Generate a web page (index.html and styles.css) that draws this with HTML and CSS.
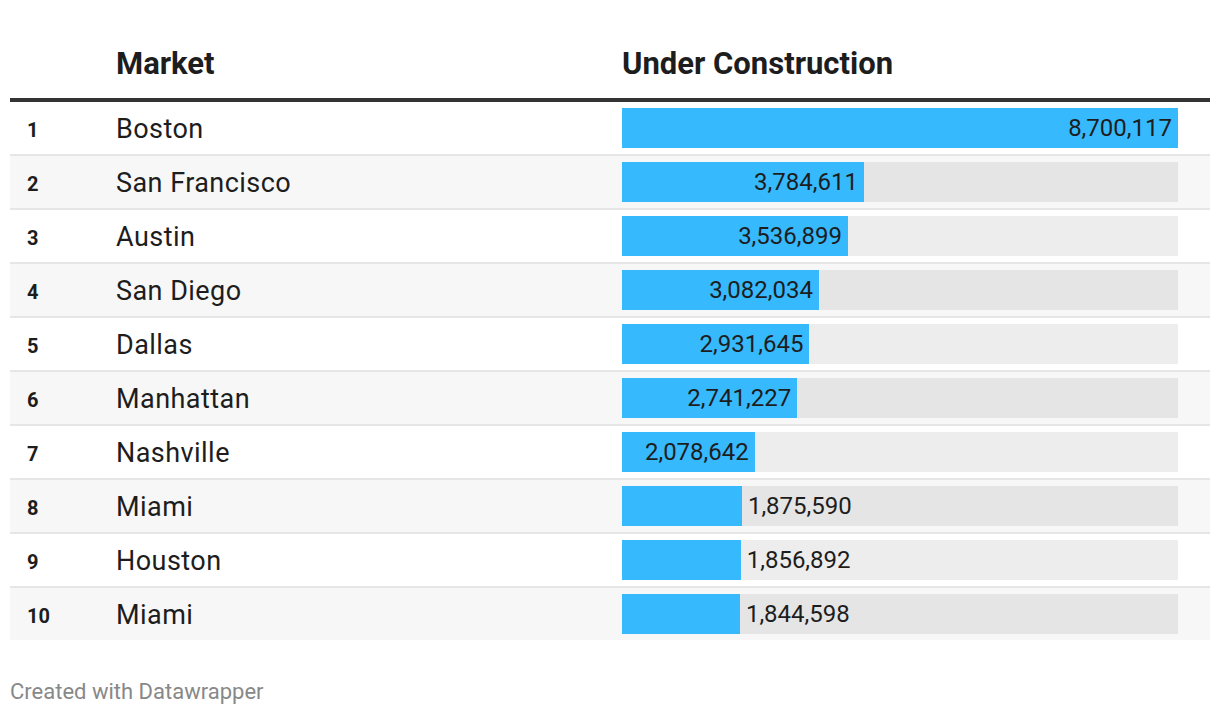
FILE: index.html
```html
<!DOCTYPE html>
<html>
<head>
<meta charset="utf-8">
<link rel="stylesheet" href="styles.css">
</head>
<body>
<div class="chart">
  <div class="thead">
    <div class="c-rank"></div>
    <div class="c-name">Market</div>
    <div class="c-bar">Under Construction</div>
  </div>
  <div class="tbody">
    <div class="row"><div class="c-rank">1</div><div class="c-name">Boston</div><div class="c-bar"><div class="track"><div class="bar" style="width:556px"><span class="lbl in">8,700,117</span></div></div></div></div>
    <div class="row alt"><div class="c-rank">2</div><div class="c-name">San Francisco</div><div class="c-bar"><div class="track"><div class="bar" style="width:241.9px"><span class="lbl in">3,784,611</span></div></div></div></div>
    <div class="row"><div class="c-rank">3</div><div class="c-name">Austin</div><div class="c-bar"><div class="track"><div class="bar" style="width:226px"><span class="lbl in">3,536,899</span></div></div></div></div>
    <div class="row alt"><div class="c-rank">4</div><div class="c-name">San Diego</div><div class="c-bar"><div class="track"><div class="bar" style="width:197px"><span class="lbl in">3,082,034</span></div></div></div></div>
    <div class="row"><div class="c-rank">5</div><div class="c-name">Dallas</div><div class="c-bar"><div class="track"><div class="bar" style="width:187.4px"><span class="lbl in">2,931,645</span></div></div></div></div>
    <div class="row alt"><div class="c-rank">6</div><div class="c-name">Manhattan</div><div class="c-bar"><div class="track"><div class="bar" style="width:175.2px"><span class="lbl in">2,741,227</span></div></div></div></div>
    <div class="row"><div class="c-rank">7</div><div class="c-name">Nashville</div><div class="c-bar"><div class="track"><div class="bar" style="width:132.8px"><span class="lbl in">2,078,642</span></div></div></div></div>
    <div class="row alt"><div class="c-rank">8</div><div class="c-name">Miami</div><div class="c-bar"><div class="track"><div class="bar" style="width:119.9px"></div><span class="lbl out">1,875,590</span></div></div></div>
    <div class="row"><div class="c-rank">9</div><div class="c-name">Houston</div><div class="c-bar"><div class="track"><div class="bar" style="width:118.7px"></div><span class="lbl out">1,856,892</span></div></div></div>
    <div class="row alt"><div class="c-rank">10</div><div class="c-name">Miami</div><div class="c-bar"><div class="track"><div class="bar" style="width:117.9px"></div><span class="lbl out">1,844,598</span></div></div></div>
  </div>
  <div class="footer">Created with Datawrapper</div>
</div>
</body>
</html>
```

FILE: styles.css
```css
html, body {
  margin: 0;
  padding: 0;
  background: #ffffff;
}
body {
  font-family: Roboto, "Liberation Sans", sans-serif;
  color: #1d1d1d;
}
.chart {
  padding: 0 10px;
}
.thead {
  display: flex;
  padding-top: 46px;
  padding-bottom: 16px;
  border-bottom: 4px solid #333333;
  font-weight: 700;
  font-size: 31px;
  line-height: 36px;
  color: #1d1d1d;
}
.c-rank {
  width: 89px;
  padding-left: 17px;
  flex: none;
}
.c-name {
  width: 506px;
  flex: none;
}
.c-bar {
  width: 556px;
  flex: none;
}
.row {
  display: flex;
  align-items: center;
  height: 52px;
  background: #ffffff;
}
.row + .row {
  border-top: 2px solid #e6e6e6;
}
.row.alt {
  background: #f7f7f7;
}
.row .c-rank {
  font-weight: 700;
  font-size: 20px;
  padding-top: 4px;
}
.row .c-name {
  font-size: 27px;
  letter-spacing: 0.45px;
  padding-top: 2px;
}
.track {
  position: relative;
  height: 40px;
  background: rgba(0, 0, 0, 0.07);
  display: flex;
  align-items: center;
}
.bar {
  height: 40px;
  background: #36b9fd;
  display: flex;
  align-items: center;
  justify-content: flex-end;
  flex: none;
}
.lbl {
  font-size: 24px;
  white-space: nowrap;
  color: #1d1d1d;
}
.lbl.in {
  padding-right: 6px;
}
.lbl.out {
  padding-left: 6px;
}
.footer {
  margin-top: 40px;
  font-size: 22px;
  color: #888888;
  line-height: 24px;
}
```
